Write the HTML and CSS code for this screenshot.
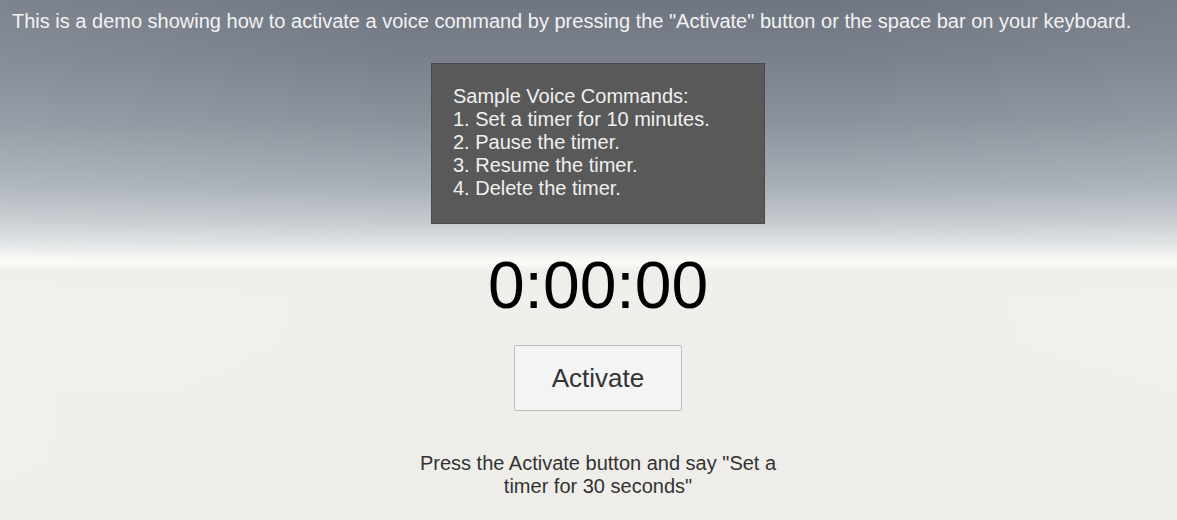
FILE: index.html
```html
<!DOCTYPE html>
<html lang="en">
<head>
    <meta charset="UTF-8">
    <title>Voice Command Demo</title>
    <link rel="stylesheet" href="styles.css">
</head>
<body>
    <p class="intro">This is a demo showing how to activate a voice command by pressing the "Activate" button or the space bar on your keyboard.</p>
    <main class="stage">
        <div class="commands">
            Sample Voice Commands:<br>
            1. Set a timer for 10 minutes.<br>
            2. Pause the timer.<br>
            3. Resume the timer.<br>
            4. Delete the timer.
        </div>
        <div class="timer">0:00:00</div>
        <button class="activate" type="button">Activate</button>
        <p class="hint">Press the Activate button and say "Set a timer for 30 seconds"</p>
    </main>
</body>
</html>
```

FILE: styles.css
```css
html, body { height: 100%; }
body {
    margin: 0;
    font-family: "Liberation Sans", Arial, sans-serif;
    overflow: hidden;
    background:
        linear-gradient(90deg, rgba(255,255,255,0.1), rgba(255,255,255,0) 35%, rgba(255,255,255,0) 70%, rgba(255,255,255,0.06)),
        linear-gradient(180deg, #6f7682 0px, #7a818c 60px, #8b929c 120px, #a7aeb6 185px, #c6cbd0 222px, #e2e5e6 246px, #f7f8f4 258px, #faf9f5 263px, #efede9 272px, #f1efeb 300px, #efede9 520px);
}
.intro {
    margin: 0;
    padding: 9px 12px 0;
    color: #f2f2f2;
    font-size: 20px;
    line-height: 24px;
    white-space: nowrap;
}
.stage {
    display: flex;
    flex-direction: column;
    align-items: center;
    padding-left: 19px;
    padding-top: 30px;
}
.commands {
    box-sizing: border-box;
    width: 334px;
    height: 161px;
    padding: 21px 21px 0;
    background: #595959;
    border: 1px solid #4a4a4a;
    color: #f0f0f0;
    font-size: 20px;
    line-height: 23px;
}
.timer {
    margin-top: 23px;
    font-size: 66px;
    line-height: 76px;
    color: #000;
}
.activate {
    margin-top: 22px;
    width: 168px;
    height: 66px;
    background: #f4f4f4;
    border: 1px solid #bdbdbd;
    border-radius: 2px;
    font-family: "Liberation Sans", Arial, sans-serif;
    font-size: 26px;
    color: #333;
    padding: 0;
}
.hint {
    margin: 41px 0 0;
    width: 380px;
    text-align: center;
    font-size: 20px;
    line-height: 23px;
    color: #333;
}
```
